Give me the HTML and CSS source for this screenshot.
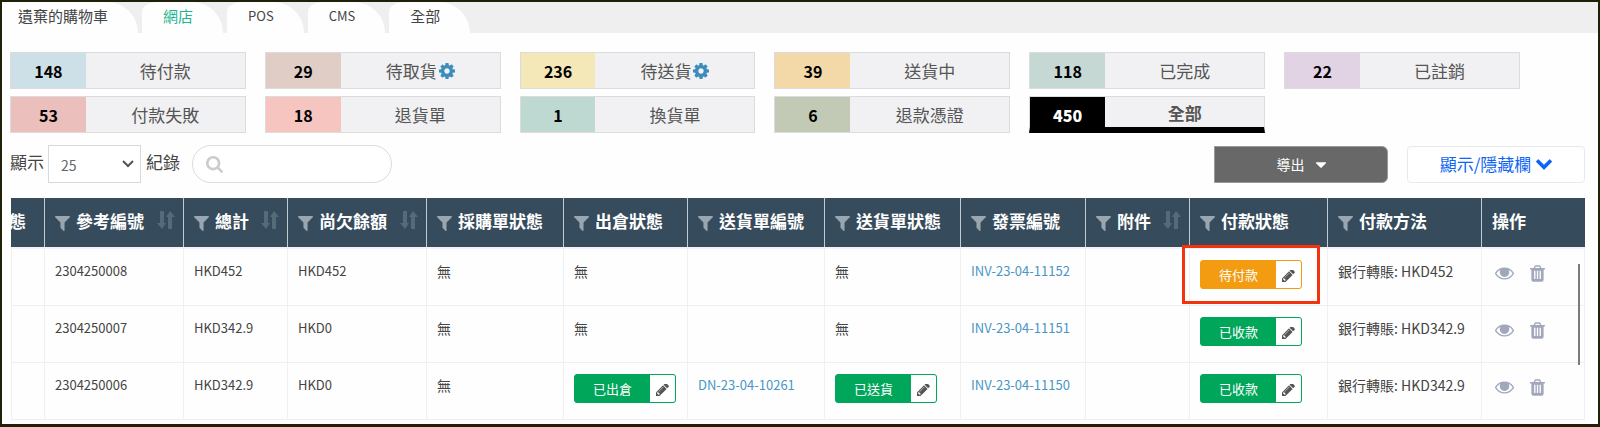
FILE: index.html
```
<!DOCTYPE html>
<html lang="zh-Hant">
<head>
  <meta charset="UTF-8">
  <title>訂單</title>
  <link rel="stylesheet" href="styles.css">
</head>
<body>

  <!-- Icon sprite -->
  <svg class="sprite" aria-hidden="true">
    <symbol id="i-cog" viewBox="128 128 1536 1536"><path d="M1152 896q0-106-75-181t-181-75-181 75-75 181 75 181 181 75 181-75 75-181zm512-109v222q0 12-8 23t-20 13l-185 28q-19 54-39 91 35 50 107 138 10 12 10 25t-9 23q-27 37-99 108t-94 71q-12 0-26-9l-138-108q-44 23-91 38-16 136-29 186-7 28-36 28h-222q-14 0-24.5-8.5t-11.5-21.5l-28-184q-49-16-90-37l-141 107q-10 9-25 9-14 0-25-11-126-114-165-168-7-10-7-23 0-12 8-23 15-21 51-66.5t54-70.5q-27-50-41-99l-183-27q-13-2-21-12.5t-8-23.5v-222q0-12 8-23t19-13l186-28q14-46 39-92-40-57-107-138-10-12-10-24 0-10 9-23 26-36 98.5-107.5t94.5-71.5q13 0 26 10l138 107q44-23 91-38 16-136 29-186 7-28 36-28h222q14 0 24.5 8.5t11.5 21.5l28 184q49 16 90 37l142-107q9-9 24-9 13 0 25 10 129 119 165 170 7 8 7 22 0 12-8 23-15 21-51 66.5t-54 70.5q26 50 41 98l183 28q13 2 21 12.5t8 23.5z"/></symbol>
    <symbol id="i-search" viewBox="64 128 1664 1664"><path d="M1216 832q0-185-131.5-316.5t-316.5-131.5-316.5 131.5-131.5 316.5 131.5 316.5 316.5 131.5 316.5-131.5 131.5-316.5zm512 832q0 52-38 90t-90 38q-54 0-90-38l-343-342q-179 124-399 124-143 0-273.5-55.5t-225-150-150-225-55.5-273.5 55.5-273.5 150-225 225-150 273.5-55.5 273.5 55.5 225 150 150 225 55.5 273.5q0 220-124 399l343 343q37 37 37 90z"/></symbol>
    <symbol id="i-filter" viewBox="192 256 1408 1408"><path d="M1595 295q17 41-14 70l-493 493v742q0 42-39 59-13 5-25 5-27 0-45-19l-256-256q-19-19-19-45v-486l-493-493q-31-29-14-70 17-39 59-39h1280q42 0 59 39z"/></symbol>
    <symbol id="i-sort" viewBox="0 0 18 18"><path d="M3 0h4v12h2l-4 6-5-6h3zM11 18h4V6h3l-5-6-4 6h2z"/></symbol>
    <symbol id="i-pencil" viewBox="128 256 1536 1536"><path d="M491 1536l91-91-235-235-91 91v107h128v128h107zm523-928q0-22-22-22-10 0-17 7l-542 542q-7 7-7 17 0 22 22 22 10 0 17-7l542-542q7-7 7-17zm-54-192l416 416-832 832h-416v-416zm683 96q0 53-37 90l-166 166-416-416 166-165q36-38 90-38 53 0 91 38l235 234q37 39 37 91z"/></symbol>
    <symbol id="i-eye" viewBox="0 384 1792 1152"><path d="M1664 960q-152-236-381-353 61 104 61 225 0 185-131.5 316.5t-316.5 131.500-316.500-131.500-131.500-316.500q0-121 61-225-229 117-381 353 133 205 333.500 326.500t434.500 121.500 434.500-121.500 333.500-326.500zm-720-384q0-20-14-34t-34-14q-125 0-214.500 89.500t-89.500 214.500q0 20 14 34t34 14 34-14 14-34q0-86 61-147t147-61q20 0 34-14t14-34zm848 384q0 34-20 69-140 230-376.500 368.500t-499.500 138.500-499.500-139-376.500-368q-20-35-20-69t20-69q140-229 376.500-368t499.500-139 499.500 139 376.500 368q20 35 20 69z"/><circle cx="896" cy="832" r="400"/></symbol>
    <symbol id="i-trash" viewBox="192 128 1408 1536"><path d="M704 1376v-704q0-14-9-23t-23-9h-64q-14 0-23 9t-9 23v704q0 14 9 23t23 9h64q14 0 23-9t9-23zm256 0v-704q0-14-9-23t-23-9h-64q-14 0-23 9t-9 23v704q0 14 9 23t23 9h64q14 0 23-9t9-23zm256 0v-704q0-14-9-23t-23-9h-64q-14 0-23 9t-9 23v704q0 14 9 23t23 9h64q14 0 23-9t9-23zm-544-992h448l-48-117q-7-9-17-11h-317q-10 2-17 11zm928 32v64q0 14-9 23t-23 9h-96v948q0 83-47 143.500t-113 60.500h-832q-66 0-113-58.500t-47-141.500v-952h-96q-14 0-23-9t-9-23v-64q0-14 9-23t23-9h309l70-167q15-37 54-63t79-26h320q40 0 79 26t54 63l70 167h309q14 0 23 9t9 23z"/></symbol>
    <symbol id="i-chevron" viewBox="90 533 1612 1035"><path d="M1683 808l-742 741q-19 19-45 19t-45-19l-742-741q-19-19-19-45.500t19-45.500l166-165q19-19 45-19t45 19l531 531 531-531q19-19 45-19t45 19l166 165q19 19 19 45.500t-19 45.500z"/></symbol>
    <symbol id="i-caret" viewBox="384 640 1024 576"><path d="M1408 704q0 26-19 45l-448 448q-19 19-45 19t-45-19l-448-448q-19-19-19-45t19-45 45-19h896q26 0 45 19t19 45z"/></symbol>
  </svg>

  <div class="page">
    <nav class="tabs">
      <a href="#cart">遺棄的購物車</a>
      <a href="#shop" class="active">網店</a>
      <a href="#pos" class="latin">POS</a>
      <a href="#cms" class="latin">CMS</a>
      <a href="#all">全部</a>
    </nav>

    <!-- Order status counters -->
    <div class="stats">
      <a href="#s1" class="stat c-blue"><b>148</b><span>待付款</span></a>
      <a href="#s2" class="stat c-brown"><b>29</b><span>待取貨<svg class="cog"><use href="#i-cog"/></svg></span></a>
      <a href="#s3" class="stat c-yellow"><b>236</b><span>待送貨<svg class="cog"><use href="#i-cog"/></svg></span></a>
      <a href="#s4" class="stat c-orange"><b>39</b><span>送貨中</span></a>
      <a href="#s5" class="stat c-mint"><b>118</b><span>已完成</span></a>
      <a href="#s6" class="stat c-purple"><b>22</b><span>已註銷</span></a>
      <a href="#s7" class="stat c-red"><b>53</b><span>付款失敗</span></a>
      <a href="#s8" class="stat c-pink"><b>18</b><span>退貨單</span></a>
      <a href="#s9" class="stat c-teal"><b>1</b><span>換貨單</span></a>
      <a href="#s10" class="stat c-olive"><b>6</b><span>退款憑證</span></a>
      <a href="#s11" class="stat c-black"><b>450</b><span>全部</span></a>
    </div>

    <div class="toolbar">
      <label for="length">顯示</label>
      <select id="length"><option>25</option></select>
      <label for="length">紀錄</label>
      <div class="search">
        <svg><use href="#i-search"/></svg>
        <input type="text" aria-label="搜尋">
      </div>
      <button type="button" class="export">導出<svg><use href="#i-caret"/></svg></button>
      <button type="button" class="columns">顯示/隱藏欄<svg><use href="#i-chevron"/></svg></button>
    </div>

    <div class="table-wrap">
      <table>
        <colgroup>
          <col class="w-cut"><col class="w-ref"><col class="w-total"><col class="w-due"><col class="w-po"><col class="w-out">
          <col class="w-dn"><col class="w-dns"><col class="w-inv"><col class="w-att"><col class="w-pay"><col class="w-method"><col class="w-act">
        </colgroup>
        <thead>
          <tr>
            <th class="cut"><div>態</div></th>
            <th><div><svg class="filter"><use href="#i-filter"/></svg>參考編號<svg class="sort"><use href="#i-sort"/></svg></div></th>
            <th><div><svg class="filter"><use href="#i-filter"/></svg>總計<svg class="sort"><use href="#i-sort"/></svg></div></th>
            <th><div><svg class="filter"><use href="#i-filter"/></svg>尚欠餘額<svg class="sort"><use href="#i-sort"/></svg></div></th>
            <th><div><svg class="filter"><use href="#i-filter"/></svg>採購單狀態</div></th>
            <th><div><svg class="filter"><use href="#i-filter"/></svg>出倉狀態</div></th>
            <th><div><svg class="filter"><use href="#i-filter"/></svg>送貨單編號</div></th>
            <th><div><svg class="filter"><use href="#i-filter"/></svg>送貨單狀態</div></th>
            <th><div><svg class="filter"><use href="#i-filter"/></svg>發票編號</div></th>
            <th><div><svg class="filter"><use href="#i-filter"/></svg>附件<svg class="sort"><use href="#i-sort"/></svg></div></th>
            <th><div><svg class="filter"><use href="#i-filter"/></svg>付款狀態</div></th>
            <th><div><svg class="filter"><use href="#i-filter"/></svg>付款方法</div></th>
            <th><div>操作</div></th>
          </tr>
        </thead>
        <tbody>
          <tr>
            <td></td>
            <td class="num">2304250008</td>
            <td class="num">HKD452</td>
            <td class="num">HKD452</td>
            <td>無</td>
            <td>無</td>
            <td></td>
            <td>無</td>
            <td class="num"><a href="#inv">INV-23-04-11152</a></td>
            <td></td>
            <td><div class="badge pending marked"><span>待付款</span><button type="button" aria-label="編輯"><svg><use href="#i-pencil"/></svg></button></div></td>
            <td>銀行轉賬: HKD452</td>
            <td><div class="actions"><button type="button" aria-label="檢視"><svg class="eye"><use href="#i-eye"/></svg></button><button type="button" aria-label="刪除"><svg class="trash"><use href="#i-trash"/></svg></button></div></td>
          </tr>
          <tr>
            <td></td>
            <td class="num">2304250007</td>
            <td class="num">HKD342.9</td>
            <td class="num">HKD0</td>
            <td>無</td>
            <td>無</td>
            <td></td>
            <td>無</td>
            <td class="num"><a href="#inv">INV-23-04-11151</a></td>
            <td></td>
            <td><div class="badge"><span>已收款</span><button type="button" aria-label="編輯"><svg><use href="#i-pencil"/></svg></button></div></td>
            <td>銀行轉賬: HKD342.9</td>
            <td><div class="actions"><button type="button" aria-label="檢視"><svg class="eye"><use href="#i-eye"/></svg></button><button type="button" aria-label="刪除"><svg class="trash"><use href="#i-trash"/></svg></button></div></td>
          </tr>
          <tr>
            <td></td>
            <td class="num">2304250006</td>
            <td class="num">HKD342.9</td>
            <td class="num">HKD0</td>
            <td>無</td>
            <td><div class="badge"><span>已出倉</span><button type="button" aria-label="編輯"><svg><use href="#i-pencil"/></svg></button></div></td>
            <td class="num"><a href="#dn">DN-23-04-10261</a></td>
            <td><div class="badge"><span>已送貨</span><button type="button" aria-label="編輯"><svg><use href="#i-pencil"/></svg></button></div></td>
            <td class="num"><a href="#inv">INV-23-04-11150</a></td>
            <td></td>
            <td><div class="badge"><span>已收款</span><button type="button" aria-label="編輯"><svg><use href="#i-pencil"/></svg></button></div></td>
            <td>銀行轉賬: HKD342.9</td>
            <td><div class="actions"><button type="button" aria-label="檢視"><svg class="eye"><use href="#i-eye"/></svg></button><button type="button" aria-label="刪除"><svg class="trash"><use href="#i-trash"/></svg></button></div></td>
          </tr>
        </tbody>
      </table>
      <div class="scroll-thumb"></div>
    </div>
  </div>

</body>
</html>
```
FILE: styles.css
```
* {
  box-sizing: border-box;
}

body {
  margin: 0;
  font-family: "Noto Sans CJK TC", sans-serif;
  font-size: 14px;
  color: #444;
}

a {
  color: #4a96c4;
  text-decoration: none;
}

button, select, input {
  font-family: inherit;
  padding: 0;
  margin: 0;
}

button {
  cursor: pointer;
}

svg {
  fill: currentColor;
  flex-shrink: 0;
}

.sprite {
  display: none;
}

.page {
  min-height: 100vh;
  border: 2px solid #20200a;
  border-bottom-width: 3px;
  background: #fefefe;
}

/* Tabs */
.tabs {
  display: flex;
  gap: 4px;
  height: 31px;
  background: #efefef;
}

.tabs a {
  padding: 0 30px 0 21px;
  border-radius: 16px 32px 0 0 / 10px 32px 0 0;
  background: #fefefe;
  color: #444;
  font-size: 15px;
  line-height: 27px;
}

.tabs a:first-child {
  padding-left: 16px;
  border-top-left-radius: 0;
}

.tabs a.latin {
  font-size: 13px;
}

.tabs a.active {
  color: #1fb592;
}

/* Status counters */
.stats {
  display: grid;
  grid-template-columns: repeat(6, 1fr);
  gap: 7px 19px;
  padding: 19px 78px 0 8px;
}

.stat {
  display: flex;
  height: 37px;
  border: 1px solid #dcdcdc;
  background: #f1f1f3;
  color: #555;
  font-size: 17px;
  line-height: 35px;
  text-align: center;
}

.stat b {
  width: 32%;
  color: #000;
  font-size: 16px;
  line-height: 36px;
}

.stat span {
  flex: 1;
  display: flex;
  justify-content: center;
  align-items: center;
  gap: 2px;
}

.cog {
  width: 16px;
  height: 16px;
  color: #3c8dbc;
}

.c-blue b { background: #cddfe7; }
.c-brown b { background: #dfcdc6; }
.c-yellow b { background: #f4e7b8; }
.c-orange b { background: #f4d9a8; }
.c-mint b { background: #c5d8d3; }
.c-purple b { background: #e1d3e3; }
.c-red b { background: #ebbfbb; }
.c-pink b { background: #f6c5c0; }
.c-teal b { background: #bed9d1; }
.c-olive b { background: #c2c9b4; }

.c-black {
  border-bottom: 6px solid #000;
  font-weight: 700;
}

.c-black b {
  background: #000;
  color: #fff;
}

/* Toolbar */
.toolbar {
  display: flex;
  align-items: center;
  padding: 12px 13px 15px 8px;
}

.toolbar label {
  padding-bottom: 4px;
  font-size: 17px;
  line-height: 34px;
}

.toolbar select {
  width: 93px;
  height: 38px;
  margin: 0 5px 0 4px;
  padding: 2px 0 0 12px;
  appearance: none;
  border: 1px solid #d5dadd;
  border-radius: 0;
  background: #fff url("data:image/svg+xml,%3Csvg xmlns='http://www.w3.org/2000/svg' width='12' height='8'%3E%3Cpath d='M1 1l5 5 5-5' fill='none' stroke='%23555' stroke-width='2'/%3E%3C/svg%3E") no-repeat right 6px center;
  color: #666;
  font-size: 14px;
}

.search {
  display: flex;
  align-items: center;
  width: 200px;
  height: 38px;
  margin-left: 12px;
  padding: 0 13px;
  border: 1px solid #d9dddd;
  border-radius: 19px;
  background: #fff;
}

.search svg {
  width: 17px;
  height: 17px;
  color: #ccc;
}

.search input {
  flex: 1;
  min-width: 0;
  border: none;
  outline: none;
  background: none;
}

.export {
  display: flex;
  justify-content: center;
  align-items: center;
  gap: 11px;
  width: 174px;
  height: 37px;
  margin-left: auto;
  border: 1px solid #999;
  border-radius: 0 6px 6px 0;
  background: #686868;
  color: #fff;
  font-size: 14px;
}

.export svg {
  width: 10px;
  height: 6px;
  margin-top: 2px;
}

.columns {
  display: flex;
  justify-content: center;
  align-items: center;
  gap: 5px;
  width: 178px;
  height: 37px;
  margin-left: 19px;
  padding-bottom: 2px;
  border: 1px solid #e6eaee;
  border-radius: 4px;
  background: #fff;
  color: #0d65f5;
  font-size: 17px;
}

.columns svg {
  width: 16px;
  height: 11px;
  margin-top: 3px;
}

/* Orders table */
.table-wrap {
  position: relative;
  margin: 0 13px 0 9px;
  overflow: hidden;
}

table {
  width: 100%;
  table-layout: fixed;
  border-collapse: separate;
  border-spacing: 0;
}

.w-cut { width: 34px; }
.w-ref { width: 139px; }
.w-total { width: 104px; }
.w-due { width: 139px; }
.w-po { width: 137px; }
.w-out { width: 124px; }
.w-dn { width: 137px; }
.w-dns { width: 136px; }
.w-inv { width: 125px; }
.w-att { width: 104px; }
.w-pay { width: 138px; }
.w-method { width: 154px; }
.w-act { width: 103px; }

th {
  height: 49px;
  padding: 0 8px 4px 10px;
  border-right: 1px solid #c3cbd1;
  background: #364b5b;
  color: #fff;
  font-size: 17px;
  font-weight: 700;
  white-space: nowrap;
}

th:last-child {
  border-right: none;
}

th div {
  display: flex;
  align-items: center;
  height: 44px;
}

th.cut {
  padding: 0 18px 4px 0;
}

th.cut div {
  justify-content: flex-end;
}

.filter {
  width: 15px;
  height: 15px;
  margin: 6px 6px 0 0;
  color: #9aa6af;
}

.sort {
  width: 18px;
  height: 18px;
  margin: 0 0 2px auto;
  color: #566b7a;
}

td {
  height: 57px;
  padding: 11px 0 0 10px;
  border-right: 1px solid #f0f0f2;
  border-bottom: 1px solid #f0f0f2;
  line-height: 22px;
  vertical-align: top;
  white-space: nowrap;
}

td:first-child {
  border-left: 1px solid #f0f0f2;
}

tbody tr:first-child td {
  height: 59px;
  border-top: 2px solid #f3f2f6;
}

.num {
  font-size: 13px;
}

.badge {
  position: relative;
  display: flex;
  width: 102px;
  height: 29px;
  border: 1px solid #00a65a;
  border-radius: 3px;
  background: #00a65a;
  color: #fff;
  font-size: 13px;
  line-height: 27px;
}

.badge span {
  flex: 1;
  text-align: center;
}

.badge button {
  display: flex;
  justify-content: center;
  align-items: center;
  width: 25px;
  padding-top: 4px;
  border: none;
  border-radius: 0 2px 2px 0;
  background: #fff;
  color: #555;
}

.badge button svg {
  width: 13px;
  height: 13px;
}

.badge.pending {
  border-color: #f39c12;
  background: #f39c12;
}

/* Red frame round the badge */
.badge.marked::after {
  content: "";
  position: absolute;
  inset: -16px -19px;
  border: 3px solid #f2330f;
}

.actions {
  display: flex;
  align-items: center;
  gap: 16px;
  padding: 5px 0 0 3px;
}

.actions button {
  display: flex;
  border: none;
  background: none;
  color: #a2a8bc;
}

.eye {
  width: 19px;
  height: 13px;
}

.trash {
  width: 15px;
  height: 17px;
}

.scroll-thumb {
  position: absolute;
  top: 66px;
  right: 5px;
  width: 2px;
  height: 101px;
  background: #7a7a80;
}
```
